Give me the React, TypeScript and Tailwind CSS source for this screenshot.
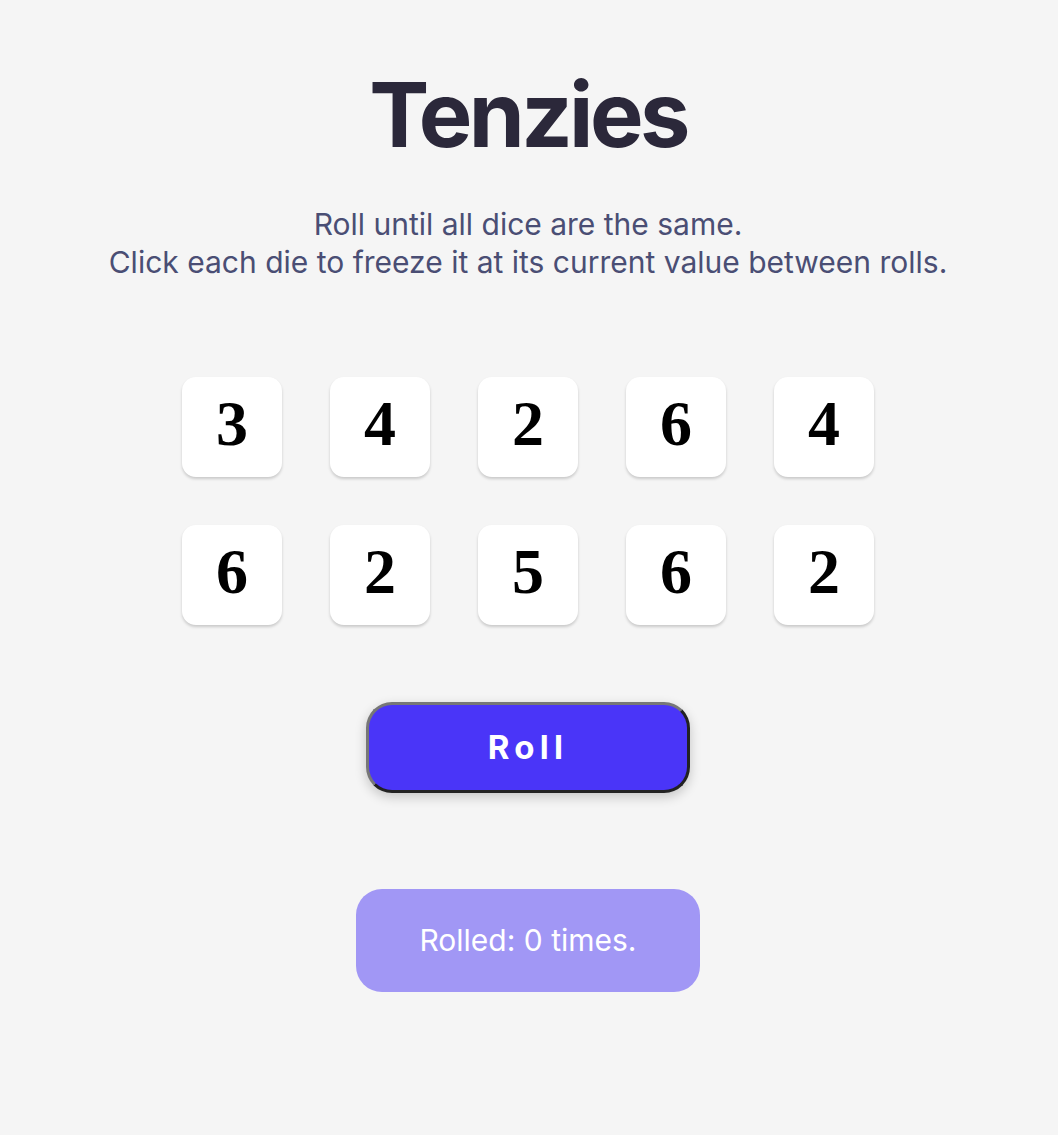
export default function App() {
  const dice = [3, 4, 2, 6, 4, 6, 2, 5, 6, 2]

  return (
    <div className="min-h-screen w-full bg-white">
      <main className="flex h-[1135px] w-[1058px] flex-col items-center bg-[#f5f5f5] pr-[2px] font-['Inter',sans-serif]">
        <h1 className="mt-[70px] text-[90px] font-bold leading-none tracking-[-0.04em] text-[#2b283a]">Tenzies</h1>
        <p className="mt-[45px] text-center text-[30px] leading-[38px] text-[#4a4e74]">
          Roll until all dice are the same.
          <br />
          Click each die to freeze it at its current value between rolls.
        </p>

        <div className="mt-[96px] grid grid-cols-5 gap-12">
          {dice.map((value, i) => (
            <button
              key={i}
              className="flex h-[100px] w-[100px] items-center justify-center rounded-[14px] bg-white pb-[6px] font-['Liberation_Serif',serif] text-[64px] font-bold text-black shadow-[0_2px_3px_rgba(0,0,0,0.18)]"
            >
              {value}
            </button>
          ))}
        </div>

        <button className="mt-[77px] h-[91px] w-[324px] rounded-[26px] border-[3px] border-t-[#777] border-r-[#222] border-b-[#222] border-l-[#777] bg-[#4a35f8] text-[33px] font-bold tracking-[0.16em] text-white shadow-[0_4px_12px_rgba(0,0,0,0.2)]">
          Roll
        </button>

        <div className="mt-[96px] flex h-[103px] w-[344px] items-center justify-center rounded-[26px] bg-[#a197f5] text-[30px] text-white">
          Rolled: 0 times.
        </div>
      </main>
    </div>
  )
}
